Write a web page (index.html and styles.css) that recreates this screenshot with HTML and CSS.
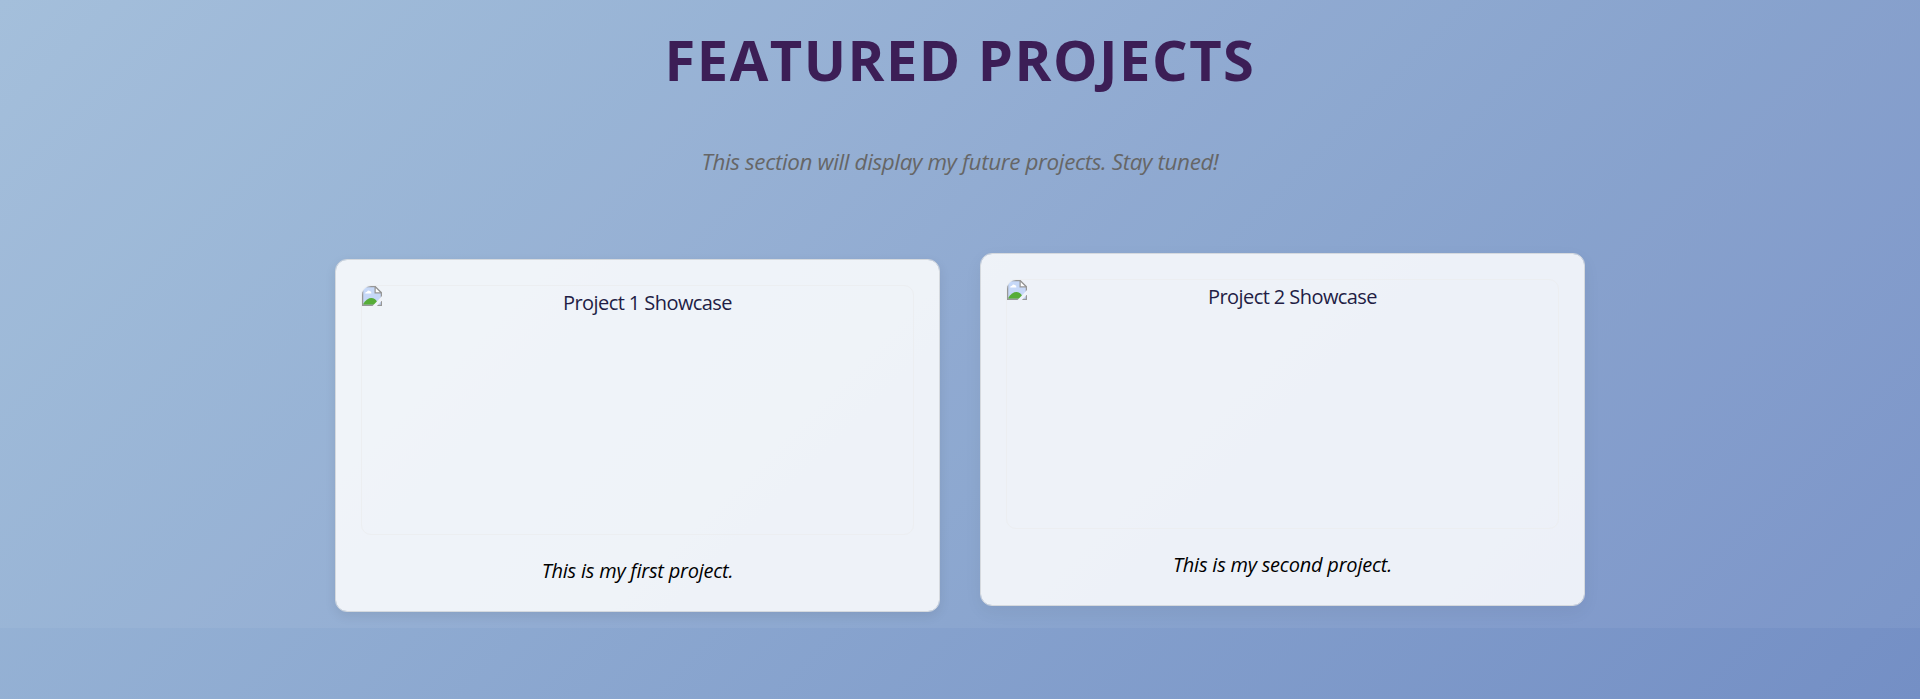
FILE: index.html
```html
<!DOCTYPE html>
<html lang="en">
<head>
<meta charset="utf-8">
<title>Featured Projects</title>
<link rel="stylesheet" href="styles.css">
</head>
<body>
<section class="projects">
  <h2 class="title">FEATURED PROJECTS</h2>
  <p class="intro">This section will display my future projects. Stay tuned!</p>
  <div class="cards">
    <article class="card">
      <div class="shot">
        <svg class="broken" viewBox="0 0 16 16"><path d="M.5.5h10l5 5v10H.5z" fill="#c6d8f8"/><path d="M2.500 6q0-1.500 1.500-1.500q.8-1.500 2.200-.5q1.600.3 1.300 2z" fill="#fff"/><path d="M1 15v-.8Q4 9.500 7.500 9.500q3 0 4.500 3v2.500z" fill="#56ad38"/><path d="M.5 16V.5h10l5 5V16M0 15.500h16" fill="none" stroke="#979797"/><path d="M10.500.5v5h5z" fill="#fff" stroke="#979797"/><path d="M16.500 7.500v3.500L11.500 16.500H8z" fill="#f0f3f8"/></svg>
        <span class="alt">Project 1 Showcase</span>
      </div>
      <p class="caption">This is my first project.</p>
    </article>
    <article class="card raised">
      <div class="shot">
        <svg class="broken" viewBox="0 0 16 16"><path d="M.5.5h10l5 5v10H.5z" fill="#c6d8f8"/><path d="M2.500 6q0-1.500 1.500-1.500q.8-1.500 2.200-.5q1.600.3 1.300 2z" fill="#fff"/><path d="M1 15v-.8Q4 9.500 7.500 9.500q3 0 4.500 3v2.500z" fill="#56ad38"/><path d="M.5 16V.5h10l5 5V16M0 15.500h16" fill="none" stroke="#979797"/><path d="M10.500.5v5h5z" fill="#fff" stroke="#979797"/><path d="M16.500 7.500v3.500L11.500 16.500H8z" fill="#eef2fa"/></svg>
        <span class="alt">Project 2 Showcase</span>
      </div>
      <p class="caption">This is my second project.</p>
    </article>
  </div>
</section>
</body>
</html>
```
FILE: styles.css
```css
* { box-sizing: border-box; }
body {
  margin: 0;
  height: 699px;
  overflow: hidden;
  font-family: "Open Sans", "Noto Sans", sans-serif;
  background: linear-gradient(135deg, #9fbcd9 0%, #748fc5 100%);
}
.projects {
  height: 628px;
  padding-top: 19px;
  text-align: center;
  background: rgba(255, 255, 255, 0.055);
}
.title {
  margin: 0;
  height: 80px;
  font-size: 56px;
  line-height: 80px;
  font-weight: 700;
  letter-spacing: 1.5px;
  color: #3c1e56;
  white-space: nowrap;
}
.intro {
  margin: 47px 0 0;
  height: 32px;
  font-size: 22.4px;
  line-height: 32px;
  font-style: italic;
  letter-spacing: -0.35px;
  color: #666;
  white-space: nowrap;
}
.cards {
  display: flex;
  justify-content: center;
  gap: 40px;
  margin-top: 81px;
}
.card {
  width: 605px;
  height: 353px;
  padding: 25px;
  border: 1px solid #d5d9de;
  border-radius: 12px;
  background: rgba(255, 255, 255, 0.85);
  background-clip: padding-box;
  box-shadow: 0 4px 12px rgba(0, 0, 0, 0.08);
}
.raised {
  transform: translateY(-6px);
  box-shadow: 0 6px 18px rgba(0, 0, 0, 0.05);
}
.shot {
  display: flex;
  height: 250px;
  border: 1px solid #eceef1;
  border-radius: 10px;
  overflow: hidden;
}
.broken {
  flex: none;
  width: 20px;
  height: 20px;
}
.alt {
  flex: 1;
  font-size: 20px;
  line-height: 34px;
  letter-spacing: -0.57px;
  color: #221d45;
  white-space: nowrap;
}
.caption {
  margin: 20px 0 0;
  font-size: 20px;
  line-height: 32px;
  font-style: italic;
  letter-spacing: -0.22px;
  color: #000;
}
```
